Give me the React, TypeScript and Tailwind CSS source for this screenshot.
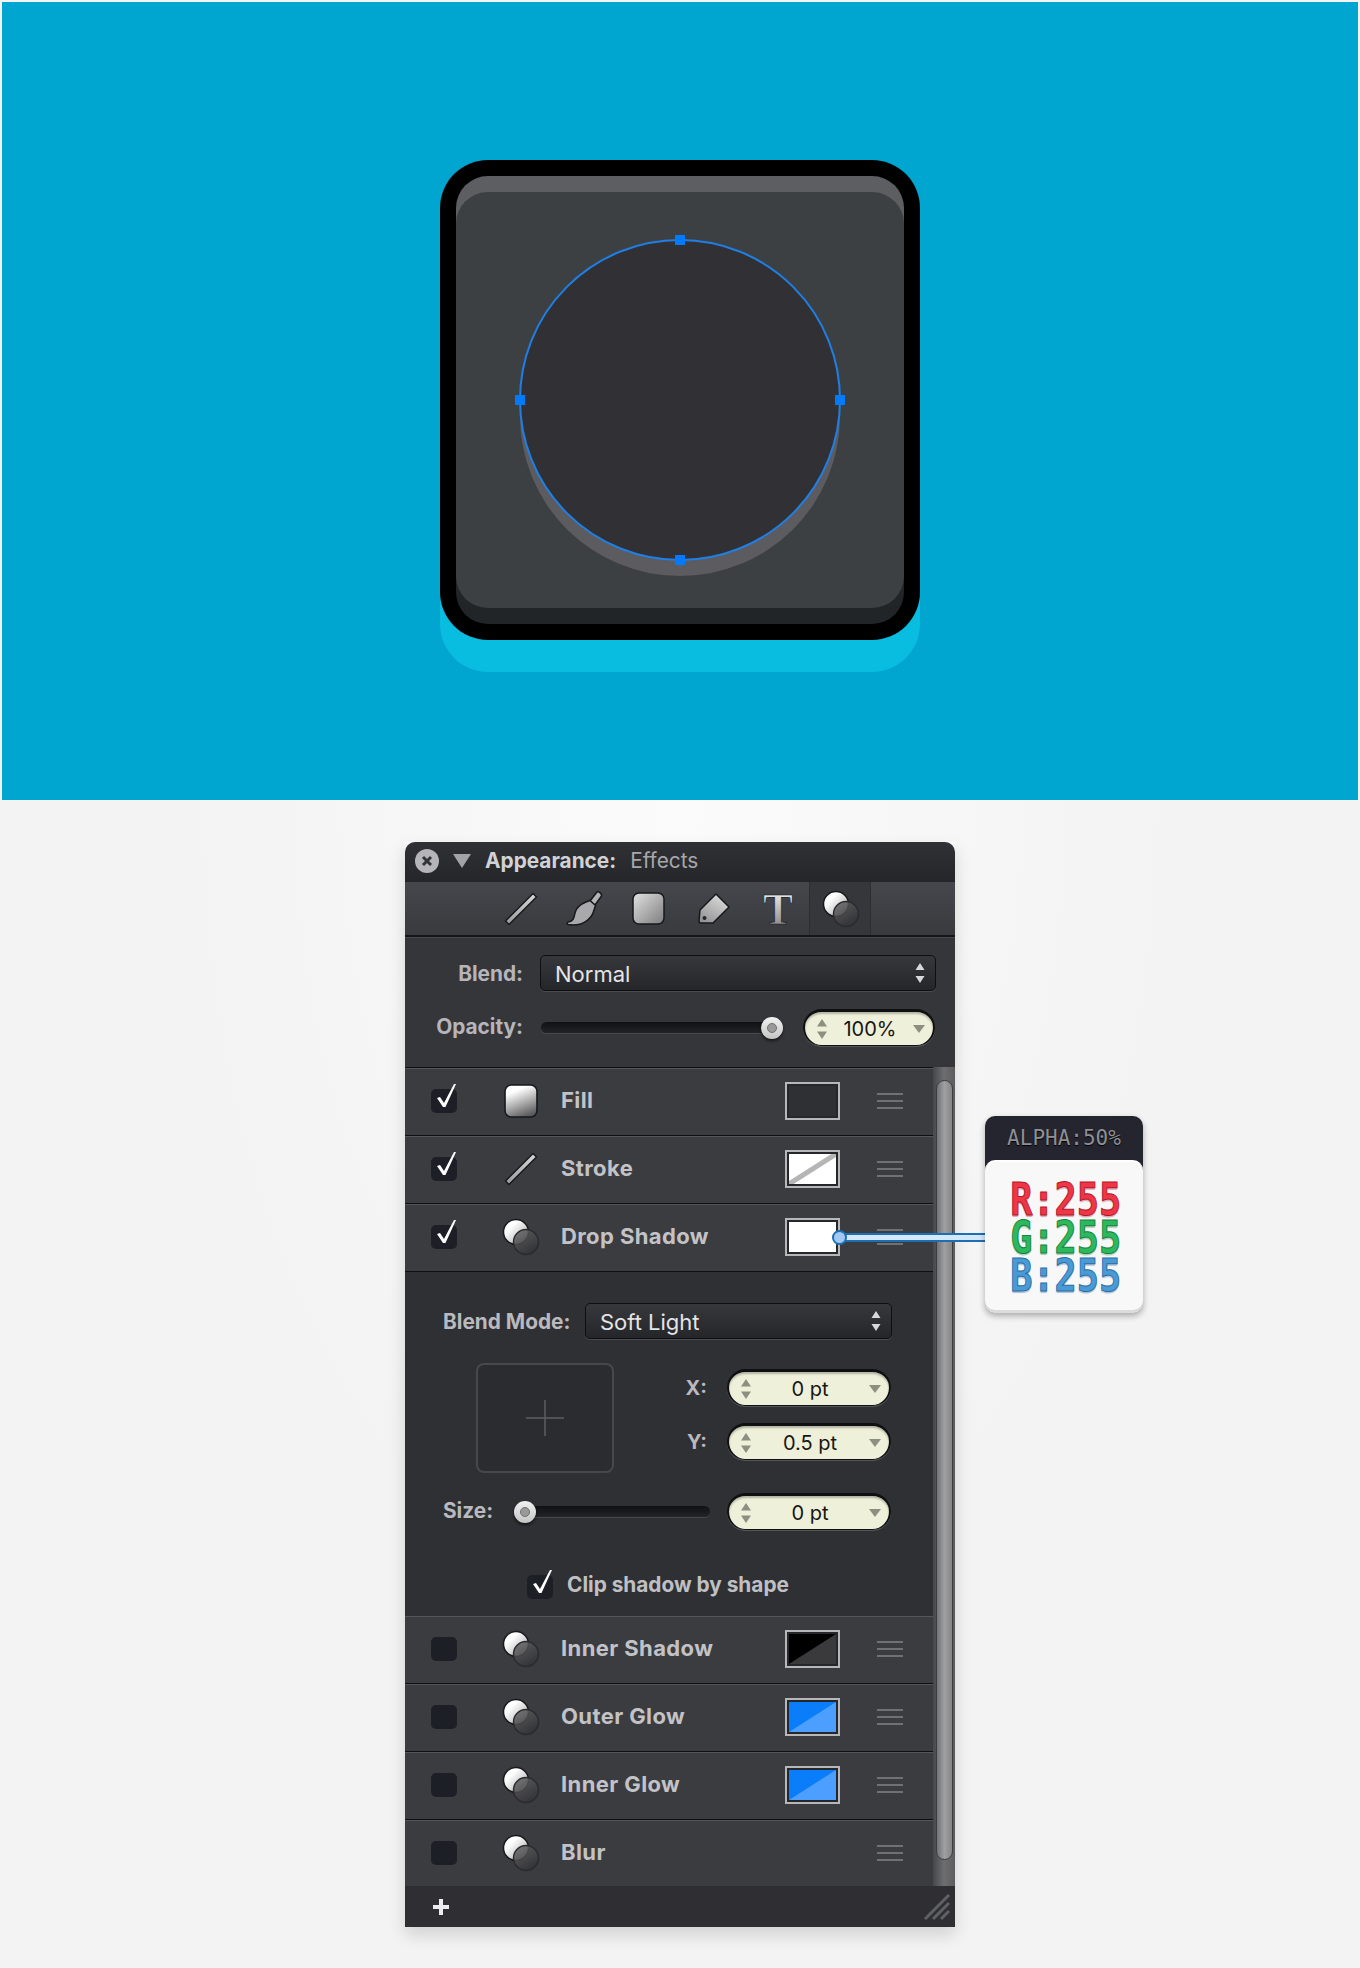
import React from 'react';

const ui = "font-['Inter','Liberation_Sans',sans-serif]";

function ShadowIcon() {
  return (
    <svg width="38" height="38" viewBox="0 0 38 38" className="shrink-0">
      <defs>
        <linearGradient id="sh-a" x1="0" y1="0" x2="1" y2="1">
          <stop offset="0.3" stopColor="#ffffff" />
          <stop offset="1" stopColor="#9a9a9a" />
        </linearGradient>
        <linearGradient id="sh-b" x1="0" y1="0" x2="0.6" y2="1">
          <stop offset="0" stopColor="#666668" />
          <stop offset="1" stopColor="#333335" />
        </linearGradient>
      </defs>
      <circle cx="14" cy="14" r="12.5" fill="url(#sh-a)" stroke="#17181b" strokeWidth="1.5" />
      <circle cx="24" cy="24" r="12.5" fill="url(#sh-b)" fillOpacity="0.85" stroke="#2a2b2e" strokeWidth="1.5" />
    </svg>
  );
}

function LineIcon() {
  return (
    <svg width="34" height="34" viewBox="0 0 34 34" className="shrink-0">
      <defs>
        <linearGradient id="ln" x1="0" y1="1" x2="1" y2="0">
          <stop offset="0" stopColor="#9a9a9c" />
          <stop offset="1" stopColor="#d8d8d8" />
        </linearGradient>
      </defs>
      <path d="M29 1.5 L32.5 5 L5 32.5 L1.5 29 Z" fill="url(#ln)" stroke="#17181b" strokeWidth="1.5" strokeLinejoin="round" />
    </svg>
  );
}

function SquareIcon() {
  return (
    <svg width="33" height="33" viewBox="0 0 33 33" className="shrink-0">
      <defs>
        <linearGradient id="sq" x1="0" y1="0" x2="1" y2="1">
          <stop offset="0" stopColor="#e2e2e2" />
          <stop offset="1" stopColor="#7d7d7f" />
        </linearGradient>
      </defs>
      <rect x="1" y="1" width="31" height="31" rx="6" fill="url(#sq)" stroke="#17181b" strokeWidth="1.5" />
    </svg>
  );
}

function RowFillIcon() {
  return (
    <svg width="34" height="34" viewBox="0 0 33 33" className="shrink-0">
      <defs>
        <linearGradient id="rf" x1="0.2" y1="0" x2="0.6" y2="1">
          <stop offset="0.2" stopColor="#ffffff" />
          <stop offset="1" stopColor="#5c5c5e" />
        </linearGradient>
      </defs>
      <rect x="1" y="1" width="31" height="31" rx="6" fill="url(#rf)" stroke="#17181b" strokeWidth="1.5" />
    </svg>
  );
}

function BrushIcon() {
  return (
    <svg width="38" height="36" viewBox="0 0 38 36" className="shrink-0">
      <path d="M31 1 C33 0 36 3 35.5 5 L29 14 L24 10 Z" fill="#b3b3b5" stroke="#17181b" strokeWidth="1.5" strokeLinejoin="round" />
      <path d="M20 11 L24 9.5 L29.5 14.5 L28 19 C26 28 16 36 2 33.5 C0.5 33 1 31 2.5 31 C8 30 8 26 9 22 C10 17 15 13 20 11 Z" fill="#a9a9ab" stroke="#17181b" strokeWidth="1.5" strokeLinejoin="round" />
    </svg>
  );
}

function TagIcon() {
  return (
    <svg width="33" height="33" viewBox="0 0 33 33" className="shrink-0">
      <defs>
        <linearGradient id="tg" x1="0.8" y1="0" x2="0.2" y2="1">
          <stop offset="0" stopColor="#dedede" />
          <stop offset="1" stopColor="#939395" />
        </linearGradient>
      </defs>
      <path d="M18 2 L31 15 L15 31 L3 31 C1.8 31 1 30 1 29 L2 18 Z" fill="url(#tg)" stroke="#17181b" strokeWidth="1.5" strokeLinejoin="round" />
      <circle cx="6.5" cy="26" r="2" fill="#25262a" />
    </svg>
  );
}

function TIcon() {
  return (
    <svg width="32" height="52" viewBox="0 0 32 52" className="shrink-0">
      <defs>
        <linearGradient id="tt" x1="0" y1="0" x2="0" y2="1">
          <stop offset="0.15" stopColor="#eeeeee" />
          <stop offset="0.85" stopColor="#88888b" />
        </linearGradient>
      </defs>
      <text x="16" y="41" textAnchor="middle" fontSize="45" fontWeight="700" fontFamily="'Liberation Serif',serif" fill="url(#tt)" stroke="#17181b" strokeWidth="0.7">T</text>
    </svg>
  );
}

function Updown({ color = '#8e8f80', w = 12 }: { color?: string; w?: number }) {
  return (
    <svg width={w} height="24" viewBox="0 0 12 24" className="shrink-0">
      <path d="M6 2 L11 9.5 L1 9.5 Z M1 14.5 L11 14.5 L6 22 Z" fill={color} />
    </svg>
  );
}

function Pill({ value, width }: { value: string; width: string }) {
  return (
    <div className={`${width} relative flex h-[37px] shrink-0 items-center rounded-full border-2 border-b border-[#0f1012] border-t-[3px] bg-[#eef0d9] pl-[11px] pr-[7px] shadow-[inset_0_2px_2px_rgba(0,0,0,0.25),0_1px_0_#55565a]`}>
      <Updown />
      <span className={`flex-1 text-center text-[20px] leading-none text-[#161614] ${ui}`}>{value}</span>
      <svg width="14" height="10" viewBox="0 0 14 10" className="shrink-0">
        <path d="M1 1 L13 1 L7 9 Z" fill="#8e8f80" />
      </svg>
    </div>
  );
}

function Select({ value, width }: { value: string; width: string }) {
  return (
    <div className={`${width} flex h-[36px] shrink-0 items-center justify-between rounded-[5px] border border-[#0e0f11] bg-gradient-to-b from-[#37383c] to-[#25262a] pl-[14px] pr-[10px] shadow-[0_1px_0_#4a4b4f]`}>
      <span className={`mt-[2px] text-[22px] leading-none text-[#e4e4e6] ${ui}`}>{value}</span>
      <svg width="10" height="22" viewBox="0 0 10 22" className="shrink-0">
        <path d="M5 1 L9.5 8 L0.5 8 Z M0.5 14 L9.5 14 L5 21 Z" fill="#d8d8da" />
      </svg>
    </div>
  );
}

function Thumb() {
  return (
    <div className="flex h-[22px] w-[22px] items-center justify-center rounded-full bg-gradient-to-b from-[#f2f2f2] to-[#c4c4c4] shadow-[0_2px_3px_rgba(0,0,0,0.6)]">
      <div className="h-[10px] w-[10px] rounded-full border border-[#6f6f6f] bg-[#9a9a9a]" />
    </div>
  );
}

function Check() {
  return (
    <div className="relative h-[24px] w-[26px] shrink-0 rounded-[5px] bg-[#1d1f27]">
      <svg width="26" height="24" viewBox="0 0 26 24" className="absolute left-0 top-0 overflow-visible">
        <path d="M6 9 L9 8 L13 14 L23 -5 L25 -5 L14.5 18 L12 18 Z" fill="#ffffff" />
      </svg>
    </div>
  );
}

function EmptyCheck() {
  return <div className="h-[24px] w-[26px] shrink-0 rounded-[5px] bg-[#1d1f27]" />;
}

type Tone = 'dark' | 'stroke' | 'white' | 'black' | 'blue';

function Swatch({ tone }: { tone: Tone }) {
  return (
    <div className="h-[38px] w-[55px] shrink-0 border-2 border-[#b7b7b9] bg-[#26272a] p-[2px]">
      <svg width="47" height="30" viewBox="0 0 47 30" className="block">
        {tone === 'dark' && <rect width="47" height="30" fill="#2f3033" />}
        {tone === 'white' && <rect width="47" height="30" fill="#ffffff" />}
        {tone === 'stroke' && (
          <>
            <rect width="47" height="30" fill="#ffffff" />
            <path d="M0 30 L47 0" stroke="#b5b5b5" strokeWidth="5" />
          </>
        )}
        {tone === 'black' && (
          <>
            <rect width="47" height="30" fill="#3a3a3c" />
            <path d="M0 0 L47 0 L0 30 Z" fill="#000000" />
          </>
        )}
        {tone === 'blue' && (
          <>
            <rect width="47" height="30" fill="#4d9fff" />
            <path d="M0 0 L47 0 L0 30 Z" fill="#0a7dfb" />
          </>
        )}
      </svg>
    </div>
  );
}

function Grip() {
  return (
    <div className="flex w-[26px] shrink-0 flex-col gap-[5px]">
      <div className="h-[2px] bg-[#707175]" />
      <div className="h-[2px] bg-[#707175]" />
      <div className="h-[2px] bg-[#707175]" />
    </div>
  );
}

function Row({
  label,
  icon,
  on,
  tone,
  h = 'h-[68px]',
  topLine = 'border-[#0e0f11]',
}: {
  label: string;
  icon: React.ReactNode;
  on?: boolean;
  tone?: Tone;
  h?: string;
  topLine?: string;
}) {
  return (
    <div className={`${h} border-t ${topLine}`}>
      <div className="flex h-full items-center border-t border-[#55565a] bg-[#3b3c40] pb-[2px] pl-[26px]">
        {on ? <Check /> : <EmptyCheck />}
        <div className="ml-[45px] flex w-[38px] shrink-0 justify-center">{icon}</div>
        <span className={`mb-[2px] ml-[21px] w-[224px] shrink-0 text-[22px] font-bold leading-none tracking-[0.4px] text-[#c3c3c7] ${ui}`}>{label}</span>
        {tone ? <Swatch tone={tone} /> : <div className="w-[55px] shrink-0" />}
        <div className="ml-[37px]">
          <Grip />
        </div>
      </div>
    </div>
  );
}

function Canvas() {
  return (
    <div className="mx-[2px] flex h-[800px] justify-center border-t-2 border-[#f4f4f4] bg-[#00a6d0] pt-[158px]">
      <svg width="480" height="512" viewBox="0 0 480 512">
        <rect x="0" y="32" width="480" height="480" rx="48" fill="#08bddf" />
        <rect x="0" y="0" width="480" height="480" rx="48" fill="#000000" />
        <clipPath id="inner">
          <rect x="16" y="16" width="448" height="448" rx="32" />
        </clipPath>
        <g clipPath="url(#inner)">
          <rect x="16" y="16" width="448" height="224" fill="#5c5e62" />
          <rect x="16" y="240" width="448" height="224" fill="#222527" />
        </g>
        <rect x="16" y="32" width="448" height="416" rx="32" fill="#3d4043" />
        <circle cx="240" cy="256" r="160" fill="#5c5c60" />
        <circle cx="240" cy="240" r="160" fill="#313135" stroke="#1f7fe5" strokeWidth="2" />
        <rect x="235" y="75" width="10" height="10" fill="#007aff" />
        <rect x="235" y="395" width="10" height="10" fill="#007aff" />
        <rect x="75" y="235" width="10" height="10" fill="#007aff" />
        <rect x="395" y="235" width="10" height="10" fill="#007aff" />
      </svg>
    </div>
  );
}

function Callout() {
  return (
    <>
      {/* connector from the swatch to the readout */}
      <div className="absolute left-[438px] top-[391px] flex h-[9px] w-[143px] flex-col">
        <div className="h-[2px] bg-[#1d6fb5]" />
        <div className="h-[5px] bg-[#d5e8fa]" />
        <div className="h-[2px] bg-[#1d6fb5]" />
      </div>
      <div className="absolute left-[427px] top-[388px] h-[15px] w-[15px] rounded-full border-2 border-[#1d6fb5] bg-[#a3c9f3]" />
      <div className="absolute left-[580px] top-[274px] flex h-[197px] w-[158px] flex-col rounded-[10px] bg-[#25252f] shadow-[0_3px_6px_rgba(0,0,0,0.3)]">
        <div className="flex h-[44px] shrink-0 items-center justify-center pt-[1px] font-['DejaVu_Sans_Mono',monospace] text-[21px] leading-none text-[#8f8f95] [text-shadow:0_1px_1px_#000]">
          ALPHA:50%
        </div>
        <div className="flex flex-1 flex-col items-center justify-center rounded-[10px] border-t-2 border-[#ffffff] bg-[#f8f8f9] pl-[3px] shadow-[inset_0_-3px_0_#dcdcdc]">
          <div className="scale-x-[0.82] font-['DejaVu_Sans_Mono',monospace] text-[45px] font-bold leading-[38px] text-[#ee3646] [-webkit-text-stroke:1px_#b5162a] [text-shadow:0_2px_1px_rgba(150,20,40,0.35)]">R:255</div>
          <div className="scale-x-[0.82] font-['DejaVu_Sans_Mono',monospace] text-[45px] font-bold leading-[38px] text-[#2cb95e] [-webkit-text-stroke:1px_#17833d] [text-shadow:0_2px_1px_rgba(20,120,60,0.35)]">G:255</div>
          <div className="scale-x-[0.82] font-['DejaVu_Sans_Mono',monospace] text-[45px] font-bold leading-[38px] text-[#4a9ad6] [-webkit-text-stroke:1px_#2a6ea6] [text-shadow:0_2px_1px_rgba(30,90,150,0.35)]">B:255</div>
        </div>
      </div>
    </>
  );
}

function Panel() {
  return (
    <div className="relative ml-[405px] flex h-[1085px] w-[550px] flex-col shadow-[0_8px_16px_rgba(0,0,0,0.14)]">
      {/* title bar */}
      <div className="flex h-[40px] shrink-0 items-center rounded-t-[10px] bg-gradient-to-b from-[#303135] to-[#25262a] pb-[2px] pl-[10px]">
        <div className="flex h-[24px] w-[24px] items-center justify-center rounded-full bg-[#b5b5b8]">
          <svg width="12" height="12" viewBox="0 0 12 12">
            <path d="M2 2 L10 10 M10 2 L2 10" stroke="#333438" strokeWidth="3" />
          </svg>
        </div>
        <svg width="18" height="14" viewBox="0 0 18 14" className="ml-[14px]">
          <path d="M0 0 L18 0 L9 14 Z" fill="#a3a3a6" />
        </svg>
        <span className={`ml-[14px] text-[20.8px] font-bold leading-none text-[#d2d2d5] ${ui}`}>Appearance:</span>
        <span className={`ml-[14px] text-[20.8px] leading-none text-[#a7a7ab] ${ui}`}>Effects</span>
      </div>

      {/* tool tabs */}
      <div className="flex h-[55px] shrink-0 items-center border-b-2 border-[#15161a] bg-gradient-to-b from-[#45474c] to-[#383a3e] pl-[99px]">
        <LineIcon />
        <div className="ml-[28px]">
          <BrushIcon />
        </div>
        <div className="ml-[28px]">
          <SquareIcon />
        </div>
        <div className="ml-[33px]">
          <TagIcon />
        </div>
        <div className="ml-[31px]">
          <TIcon />
        </div>
        <div className="ml-[15px] flex h-full w-[62px] items-center justify-center border-x border-[#2c2d31] bg-[#36373b]">
          <div className="ml-[2px]">
            <ShadowIcon />
          </div>
        </div>
      </div>

      {/* blend and opacity */}
      <div className="flex h-[130px] shrink-0 flex-col gap-[18px] border-t border-[#47484c] bg-[#35363a] pt-[17px]">
        <div className="flex items-center">
          <span className={`mt-[2px] w-[118px] shrink-0 text-right text-[20.8px] font-bold leading-none text-[#b5b5ba] ${ui}`}>Blend:</span>
          <div className="ml-[17px]">
            <Select value="Normal" width="w-[396px]" />
          </div>
        </div>
        <div className="flex items-center">
          <span className={`w-[118px] shrink-0 text-right text-[20.8px] font-bold leading-none text-[#b5b5ba] ${ui}`}>Opacity:</span>
          <div className="relative ml-[18px] flex h-[22px] w-[242px] shrink-0 items-center">
            <div className="h-[11px] w-full rounded-full bg-gradient-to-b from-[#101113] to-[#232427] shadow-[0_1px_0_#48494d]" />
            <div className="absolute right-0 top-0">
              <Thumb />
            </div>
          </div>
          <div className="ml-[20px]">
            <Pill value="100%" width="w-[132px]" />
          </div>
        </div>
      </div>

      {/* effect list */}
      <div className="flex min-h-0 flex-1">
        <div className="w-[528px] shrink-0">
          <Row label="Fill" on tone="dark" icon={<RowFillIcon />} />
          <Row label="Stroke" on tone="stroke" icon={<LineIcon />} />
          <Row label="Drop Shadow" on tone="white" icon={<ShadowIcon />} />

          {/* drop shadow settings */}
          <div className="h-[344px] border-t border-[#0e0f11] bg-[#2f3034] pl-[38px] pt-[31px]">
            <div className="flex items-center">
              <span className={`mt-[3px] w-[142px] shrink-0 text-[20.8px] font-bold leading-none text-[#b9b9be] ${ui}`}>Blend Mode:</span>
              <Select value="Soft Light" width="w-[307px]" />
            </div>
            <div className="mt-[24px] flex">
              <div className="ml-[33px] flex h-[110px] w-[138px] shrink-0 items-center justify-center rounded-[8px] border-2 border-[#47484c] bg-[#2b2c30]">
                <svg width="38" height="36" viewBox="0 0 38 36">
                  <path d="M0 18 L38 18 M19 0 L19 36" stroke="#5c5d61" strokeWidth="1.5" />
                </svg>
              </div>
              <div className="ml-[53px] flex flex-col gap-[17px] pt-[6px]">
                <div className="flex items-center">
                  <span className={`w-[40px] shrink-0 text-right text-[20px] font-bold leading-none text-[#b9b9be] ${ui}`}>X:</span>
                  <div className="ml-[20px]">
                    <Pill value="0 pt" width="w-[164px]" />
                  </div>
                </div>
                <div className="flex items-center">
                  <span className={`w-[40px] shrink-0 text-right text-[20px] font-bold leading-none text-[#b9b9be] ${ui}`}>Y:</span>
                  <div className="ml-[20px]">
                    <Pill value="0.5 pt" width="w-[164px]" />
                  </div>
                </div>
              </div>
            </div>
            <div className="mt-[20px] flex items-center">
              <span className={`w-[71px] shrink-0 text-[20.8px] font-bold leading-none text-[#b9b9be] ${ui}`}>Size:</span>
              <div className="relative flex h-[22px] w-[196px] shrink-0 items-center">
                <div className="h-[11px] w-full rounded-full bg-gradient-to-b from-[#101113] to-[#232427] shadow-[0_1px_0_#48494d]" />
                <div className="absolute left-0 top-0">
                  <Thumb />
                </div>
              </div>
              <div className="ml-[17px]">
                <Pill value="0 pt" width="w-[164px]" />
              </div>
            </div>
            <div className="ml-[84px] mt-[45px] flex items-center">
              <Check />
              <span className={`mb-[3px] ml-[14px] text-[20.8px] font-bold leading-none text-[#c0c0c4] ${ui}`}>Clip shadow by shape</span>
            </div>
          </div>

          <Row label="Inner Shadow" tone="black" icon={<ShadowIcon />} topLine="border-[#2f3034]" />
          <Row label="Outer Glow" tone="blue" icon={<ShadowIcon />} />
          <Row label="Inner Glow" tone="blue" icon={<ShadowIcon />} />
          <Row label="Blur" icon={<ShadowIcon />} h="h-[67px]" />
        </div>

        {/* scroll bar */}
        <div className="w-[22px] shrink-0 bg-gradient-to-r from-[#46474a] via-[#6e6e70] to-[#5c5c5e] pl-[3px] pr-[2px] pt-[13px]">
          <div className="h-[780px] rounded-full border border-[#3c3d40] bg-gradient-to-r from-[#737375] via-[#a0a0a2] to-[#858587]" />
        </div>
      </div>

      {/* footer */}
      <div className="flex h-[41px] shrink-0 items-center justify-between bg-[#2f2f33] pl-[28px] pr-[5px]">
        <svg width="16" height="16" viewBox="0 0 16 16">
          <path d="M6 0 H10 V6 H16 V10 H10 V16 H6 V10 H0 V6 H6 Z" fill="#ececee" />
        </svg>
        <svg width="26" height="26" viewBox="0 0 26 26">
          <path d="M1 25 L25 1 M9 25 L25 9 M17 25 L25 17" stroke="#5f6064" strokeWidth="3" />
        </svg>
      </div>

      <Callout />
    </div>
  );
}

export default function App() {
  return (
    <div className="h-[1968px] w-[1360px] overflow-hidden bg-[#f3f3f3]">
      <Canvas />
      <div className="h-[1168px] bg-[radial-gradient(ellipse_at_50%_0%,#fbfbfb_0%,#f3f3f3_50%)] pt-[42px]">
        <Panel />
      </div>
    </div>
  );
}
